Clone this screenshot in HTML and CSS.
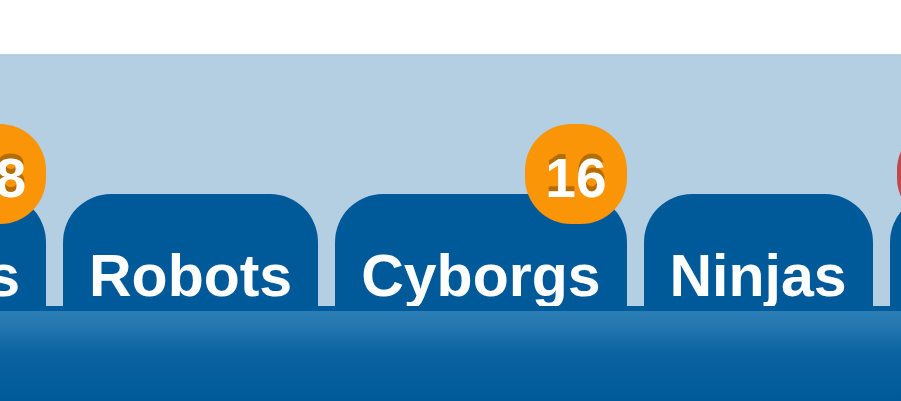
FILE: index.html
```
<!DOCTYPE html>
<html lang="en">
<head>
<meta charset="utf-8">
<title>Tabs</title>
<link rel="stylesheet" href="styles.css">
</head>
<body>
<nav class="tabs">
  <a class="tab tab-first" href="#">s<span class="badge">8</span></a>
  <a class="tab" href="#">Robots</a>
  <a class="tab" href="#">Cyborgs<span class="badge">16</span></a>
  <a class="tab" href="#">Ninjas</a>
  <a class="tab tab-last" href="#"><span class="badge badge-alert"></span></a>
</nav>
<main class="panel"></main>
</body>
</html>
```
FILE: styles.css
```
* {
  box-sizing: border-box;
}

body {
  margin: 0;
  min-height: 100vh;
  padding-top: 54px;
  display: flex;
  flex-direction: column;
  background: #fff;
  font-family: "Liberation Sans", Arial, sans-serif;
  font-weight: bold;
}

.tabs {
  display: flex;
  gap: 17px;
  height: 252px;
  padding-top: 140px;
  overflow: hidden;
  background: #b5cfe2;
}

.tab {
  position: relative;
  flex: none;
  padding: 47px 26px 0;
  border-radius: 48px 48px 0 0;
  background: #005998;
  color: #fff;
  font-size: 59px;
  line-height: 70px;
  text-decoration: none;
  white-space: nowrap;
}

/* Tabs that run past the edges of the strip */
.tab-first {
  width: 240px;
  margin-left: -194px;
  text-align: right;
}

.tab-last {
  width: 109px;
}

.badge {
  position: absolute;
  top: -70px;
  right: 0;
  min-width: 102px;
  height: 100px;
  padding: 4px 20px;
  border-radius: 46px;
  background: #fa9508;
  font-size: 55px;
  line-height: 100px;
  text-align: right;
  text-shadow: 0 -5px 0 rgba(0, 0, 0, 0.27);
}

.badge-alert {
  background: #bd4a48;
}

.panel {
  flex: 1;
  min-height: 95px;
  border-top: 5px solid #005998;
  background: linear-gradient(#2c7fb6, #2174ac 20px, #0b64a1 40px, #005998);
}
```
